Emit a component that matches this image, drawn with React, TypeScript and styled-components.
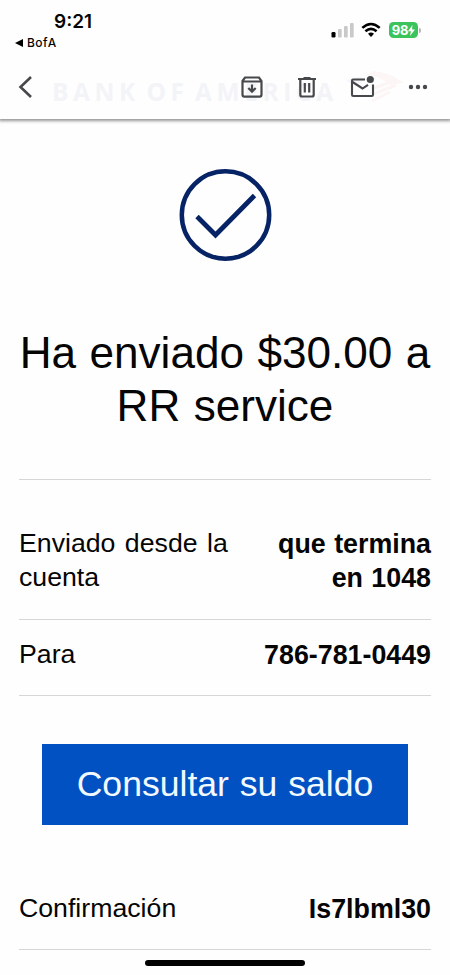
import React from "react";
import styled, { createGlobalStyle } from "styled-components";

const GlobalStyle = createGlobalStyle`
  * { box-sizing: border-box; }
  body { margin: 0; background: #fefefe; font-family: "Liberation Sans", Arial, sans-serif; color: #050505; }
`;

const Screen = styled.div`
  position: relative;
  width: 450px;
  height: 975px;
  overflow: hidden;
  background: #fefefe;
`;

const Header = styled.header`
  position: relative;
  height: 119px;
  background: #fefefe;
  box-shadow: 0 1px 3px 1px rgba(0, 0, 0, 0.42);
`;

const StatusBar = styled.div`
  height: 58px;
  display: flex;
  justify-content: space-between;
  padding: 9px 32px 0 15px;
  font-family: Inter, sans-serif;
`;

const TimeBlock = styled.div`
  width: 110px;
`;

const Clock = styled.div`
  padding: 1px 0 0 39px;
  font-size: 19px;
  line-height: 24px;
  font-weight: 600;
`;

const BackApp = styled.div`
  display: flex;
  align-items: center;
  gap: 4px;
  margin-top: 1px;
  font-size: 12px;
  line-height: 15px;
  font-weight: 500;
  letter-spacing: 0.45px;
`;

const StatusIcons = styled.div`
  display: flex;
  align-items: flex-start;
  padding-top: 13px;
`;

const Signal = styled.svg`
  margin: 1px 6px 0 0;
`;

const Wifi = styled.svg`
  margin-right: 8px;
`;

const Battery = styled.div`
  display: flex;
  align-items: center;
  justify-content: center;
  width: 29px;
  height: 16px;
  border-radius: 4.5px;
  background: #3cc45c;
  color: #fff;
  font-size: 13px;
  font-weight: 700;
  letter-spacing: -0.2px;
`;

const BatteryTip = styled.div`
  width: 2px;
  height: 5px;
  margin: 6px -3px 0 1px;
  border-radius: 0 2px 2px 0;
  background: #b5b5b5;
`;

const Toolbar = styled.div`
  position: relative;
  display: flex;
  align-items: center;
  height: 58px;
  padding: 0 22px 0 18px;
  color: #46484b;
`;

const Actions = styled.div`
  display: flex;
  align-items: center;
  margin-left: auto;
`;

const Icon = styled.svg<{ $gap?: number }>`
  display: block;
  margin-right: ${(p) => p.$gap ?? 0}px;
`;

const GhostBrand = styled.div`
  position: absolute;
  left: 52px;
  top: 78px;
  font-family: "Open Sans", sans-serif;
  font-size: 24.5px;
  line-height: 28px;
  font-weight: 700;
  letter-spacing: 4.6px;
  word-spacing: -4.5px;
  white-space: nowrap;
  color: #f3f4f8;
`;

const GhostFlag = styled.svg`
  position: absolute;
  left: 344px;
  top: 66px;
`;

const Content = styled.main`
  display: flex;
  flex-direction: column;
  padding: 49px 19px 0;
`;

const CheckMark = styled.svg`
  align-self: center;
  display: block;
`;

const Title = styled.h1`
  margin: 64px -10px 0;
  height: 153px;
  font-size: 44.1px;
  line-height: 53px;
  font-weight: 400;
  text-align: center;
  word-spacing: 1.2px;
`;

const Row = styled.div<{ $height: number; $top: number }>`
  display: flex;
  justify-content: space-between;
  height: ${(p) => p.$height}px;
  padding-top: ${(p) => p.$top}px;
  border-bottom: 1px solid #d6d6d6;
  font-size: 26.8px;
  line-height: 34px;
`;

const Divider = styled.div`
  height: 1px;
  background: #d6d6d6;
`;

const Label = styled.div`
  width: 225px;
  font-size: 26.7px;
  line-height: 33.5px;
  word-spacing: 2px;
`;

const Value = styled.div`
  width: 180px;
  font-weight: 700;
  text-align: right;
  word-spacing: 1px;
`;

const BalanceButton = styled.button`
  align-self: center;
  width: 366px;
  height: 81px;
  margin: 48px 0 0;
  padding: 0;
  border: 0;
  background: #0151c3;
  color: #f2faff;
  font-family: inherit;
  font-size: 35.6px;
  line-height: 81px;
  word-spacing: 1px;
`;

const HomeBar = styled.div`
  position: absolute;
  left: 145px;
  top: 960px;
  width: 160px;
  height: 6px;
  border-radius: 3px;
  background: #000;
`;

export default function App() {
  return (
    <>
      <GlobalStyle />
      <Screen>
        <Header>
          <GhostBrand>BANK OF AMERICA</GhostBrand>
          <GhostFlag width="64" height="40" viewBox="0 0 64 40" fill="none">
            <path d="M2 15Q12 9 22 12L14 19Z" fill="#f5f7fc" />
            <path d="M30 5Q44 6 60 17L46 19Q34 9 22 9Z" fill="#fdf6f6" />
            <path d="M30 22L44 17M30 28L52 19M28 35L46 26" stroke="#fdf5f5" strokeWidth="3" />
          </GhostFlag>
          <StatusBar>
            <TimeBlock>
              <Clock>9:21</Clock>
              <BackApp>
                <svg width="8" height="8" viewBox="0 0 8 8"><path d="M0 4L8 0V8Z" fill="#000" /></svg>
                BofA
              </BackApp>
            </TimeBlock>
            <StatusIcons>
              <Signal width="24" height="16" viewBox="0 0 24 16">
                <rect x="0.5" y="9" width="4" height="5.5" rx="1.3" fill="#000" />
                <rect x="7" y="6" width="3.7" height="8.5" rx="1" fill="#c9c9c9" />
                <rect x="13" y="3" width="3.7" height="11.5" rx="1" fill="#c9c9c9" />
                <rect x="19" y="0" width="3.7" height="14.5" rx="1" fill="#c9c9c9" />
              </Signal>
              <Wifi width="20" height="16" viewBox="0 0 20 16" fill="none" stroke="#000" strokeWidth="2.6">
                <path d="M1.3 5.9Q10 -1.9 18.7 5.9" />
                <path d="M4.4 9.3Q10 4.6 15.6 9.3" />
                <path d="M7 11.7Q10 9.3 13 11.7L10 14.9Z" fill="#000" stroke="none" />
              </Wifi>
              <Battery>
                98
                <svg width="7" height="11" viewBox="0 0 7 11"><path d="M4.5 0L0 6.2H2.9L2 11L7 4.5H4Z" fill="#fff" /></svg>
              </Battery>
              <BatteryTip />
            </StatusIcons>
          </StatusBar>
          <Toolbar>
            <Icon width="15" height="24" viewBox="0 0 15 24" fill="none" stroke="currentColor" strokeWidth="2.6">
              <path d="M13 2L2.5 12L13 22" />
            </Icon>
            <Actions>
              <Icon $gap={34} width="22" height="22" viewBox="0 0 22 22" fill="none" stroke="currentColor" strokeWidth="2.2">
                <path d="M1.5 5L4 1.5H18L20.5 5V18.8Q20.5 20.7 18.6 20.7H3.4Q1.5 20.7 1.5 18.8ZM2 5.5H20" />
                <path d="M11 8.5V15.5M7.3 12L11 15.6L14.7 12" />
              </Icon>
              <Icon $gap={33} width="20" height="22" viewBox="0 0 20 22" fill="none" stroke="currentColor" strokeWidth="2.2">
                <path d="M1 3H19M6.5 2H13.5M3.3 3V18.7Q3.3 20.5 5.1 20.5H14.9Q16.7 20.5 16.7 18.7V3M7.8 7V16.5M12.2 7V16.5" />
              </Icon>
              <Icon $gap={33} width="25" height="24" viewBox="0 0 25 24" fill="none" stroke="currentColor" strokeWidth="2.1">
                <path d="M15 4.5H3.2Q2 4.5 2 5.7V19.8Q2 21 3.2 21H21.8Q23 21 23 19.8V9.5M2.5 7L12.5 13.5L18 9.8" />
                <circle cx="20.3" cy="4.5" r="3.6" fill="currentColor" stroke="none" />
              </Icon>
              <Icon width="20" height="6" viewBox="0 0 20 6" fill="currentColor">
                <circle cx="3" cy="3" r="2.2" />
                <circle cx="10" cy="3" r="2.2" />
                <circle cx="17" cy="3" r="2.2" />
              </Icon>
            </Actions>
          </Toolbar>
        </Header>
        <Content>
          <CheckMark width="94" height="94" viewBox="0 0 94 94" fill="none" stroke="#062366">
            <circle cx="47.5" cy="47" r="43.7" strokeWidth="4.5" />
            <path d="M19 48.5L37.5 67L76.5 27.5" strokeWidth="4.8" />
          </CheckMark>
          <Title>Ha enviado $30.00 a<br />RR service</Title>
          <Divider />
          <Row $height={140} $top={47}>
            <Label>Enviado desde la cuenta</Label>
            <Value>que termina en 1048</Value>
          </Row>
          <Row $height={76} $top={18}>
            <Label>Para</Label>
            <Value>786-781-0449</Value>
          </Row>
          <BalanceButton>Consultar su saldo</BalanceButton>
          <Row $height={125} $top={67}>
            <Label>Confirmación</Label>
            <Value>Is7lbml30</Value>
          </Row>
        </Content>
        <HomeBar />
      </Screen>
    </>
  );
}
